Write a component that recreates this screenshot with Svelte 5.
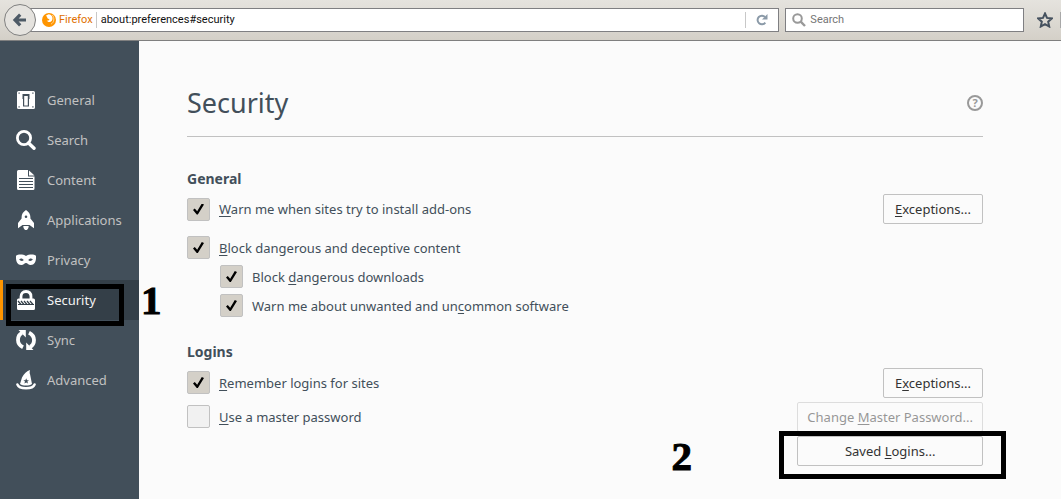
<script lang="ts">
  const nav = ['General', 'Search', 'Content', 'Applications', 'Privacy', 'Security', 'Sync', 'Advanced'];
  let current = $state('Security');
  let warn = $state(true);
  let block = $state(true);
  let downloads = $state(true);
  let unwanted = $state(true);
  let remember = $state(true);
  let master = $state(false);
</script>

{#snippet icon(name: string)}
  <svg class="nav-icon" viewBox="0 0 20 20" aria-hidden="true">
    {#if name === 'General'}
      <path fill-rule="evenodd" d="M2.500 1h15A1.500 1.500 0 0 1 19 2.500v15a1.500 1.500 0 0 1-1.500 1.500h-15A1.500 1.500 0 0 1 1 17.500v-15A1.500 1.500 0 0 1 2.500 1zM6.500 4v5h.5v7.500h6V9h.5V4zM8.200 6h3.600v9.500H8.200zM2.500 2.500v1.200h1.200V2.500zM16.300 2.500v1.200h1.200V2.500zM2.500 16.300v1.200h1.200v-1.200zM16.300 16.300v1.200h1.200v-1.200z" />
    {:else if name === 'Search'}
      <circle cx="8" cy="8" r="6.600" fill="none" stroke="currentColor" stroke-width="2.800" />
      <path d="M12.500 13l5.500 5.300" stroke="currentColor" stroke-width="3.400" stroke-linecap="round" />
    {:else if name === 'Content'}
      <path fill-rule="evenodd" d="M2.500 0H12v6.500h6.500v12a1.500 1.500 0 0 1-1.500 1.500H2.500A1.500 1.500 0 0 1 1 18.500v-17A1.500 1.500 0 0 1 2.500 0zM3 8v1h14V8zM3 11v1h14v-1zM3 14v1h14v-1zM3 17v1h14v-1z" />
      <path d="M13 .400L18.500 5.500H13z" />
    {:else if name === 'Applications'}
      <path fill-rule="evenodd" d="M10 0c2.700 1.800 4.400 4.200 4.400 7v1.600L18 13v5.200L13.500 15H6.500L2 18.200V13l3.600-4.400V7c0-2.800 1.700-5.200 4.400-7zM10 5.500a1.300 1.300 0 1 0 0 2.600 1.300 1.300 0 0 0 0-2.600z" />
      <path d="M7.300 16h5.400c0 2-.8 3.400-2.700 4.500-1.900-1.100-2.700-2.500-2.700-4.500z" />
    {:else if name === 'Privacy'}
      <path fill-rule="evenodd" d="M0 5.700C2 4 7 4 10 5.900c3-1.900 8-1.900 10-.2.300 4.300-.6 9.300-5.200 9.300-2.600 0-3.300-2-4.800-2s-2.200 2-4.800 2C.600 15-.3 10 0 5.700zM3.200 9.300c1 2 3.400 2.100 4.600.8-1.200-1.900-3.300-2-4.600-.8zm13.600 0c-1.300-1.200-3.400-1.100-4.600.8 1.200 1.300 3.600 1.200 4.600-.8z" />
    {:else if name === 'Security'}
      <path fill="none" stroke="currentColor" stroke-width="2.800" d="M5 9.500V6.700c0-3.300 1.800-5.200 5-5.200s5 1.900 5 5.200v2.800" />
      <path d="M2.500 8.500h15A1.500 1.500 0 0 1 19 10v8.500a1.500 1.500 0 0 1-1.500 1.500h-15A1.500 1.500 0 0 1 1 18.500V10a1.500 1.500 0 0 1 1.500-1.500z" />
      <path class="hatch" d="M2 11l3 3.500M5 11l3 3.500M8 11l3 3.500M11 11l3 3.500M14 11l3 3.500M2 14.500h16" />
    {:else if name === 'Sync'}
      <path fill="none" stroke="currentColor" stroke-width="3.800" d="M7 17.300C3.600 15.600 2 13.200 2 10s1.600-5.800 4-6.900M13 2.700C16.400 4.400 18 6.800 18 10s-1.600 5.800-4 6.900" />
      <path d="M2.500 0H9.800v7.500zM17.500 20h-7.300v-7.500z" />
    {:else}
      <path fill-rule="evenodd" d="M14 0c-.6 2-.3 3.500.1 4.600L16 14c-3 2-9 2-12 0L6 7.500C7.700 3.800 11 1 14 0zM10.200 8.300l-.8 1.900-2 .1 1.600 1.300-.6 2 1.800-1.200 1.800 1.200-.6-2 1.600-1.300-2-.1z" />
      <path fill="none" stroke="currentColor" stroke-width="2.400" stroke-linecap="round" d="M1.400 14.500c1.800 5 15.400 5 17.200 0" />
    {/if}
  </svg>
{/snippet}

<div class="window">
  <header class="toolbar">
    <button class="back" aria-label="Back">
      <svg viewBox="0 0 16 16"><path d="M14 8H3.500M8.200 2.600L3 8l5.200 5.400" fill="none" stroke="#4d5a66" stroke-width="3.200" /></svg>
    </button>
    <div class="url">
      <svg class="fox" viewBox="0 0 14 14" aria-hidden="true">
        <circle cx="7" cy="7" r="7" fill="#ff9500" />
        <path d="M6.500 1.300c2 .2 3.300 1.200 3.800 2.700.8 3-1 5-3 5-1.300 0-2-.7-2.500-1.500 1.300.4 2.300 0 2.800-1L5.400 5.300 5 3.800 3.800 2.700z" fill="#fff" />
        <path d="M10.400 2c2.400 3 1.700 7.500-1.200 9" fill="none" stroke="#ffd9a0" />
      </svg>
      <span class="brand">Firefox</span>
      <input class="address" type="text" aria-label="Address" value="about:preferences#security" />
      <button class="reload" aria-label="Reload">
        <svg viewBox="0 0 12 12"><path d="M9.300 8.600A4.300 4.300 0 1 1 9 3" fill="none" stroke="#8b9aa8" stroke-width="2" /><path d="M11.500 0v5.500H6z" fill="#8b9aa8" /></svg>
      </button>
    </div>
    <div class="search">
      <svg viewBox="0 0 14 14" aria-hidden="true"><circle cx="5.500" cy="5.500" r="4.300" fill="none" stroke="#999" stroke-width="2" /><path d="M8.700 8.700l4.300 4.300" stroke="#999" stroke-width="2.400" /></svg>
      <input type="text" aria-label="Search" placeholder="Search" />
    </div>
    <button class="star" aria-label="Bookmark this page">
      <svg viewBox="0 0 16 16"><path d="M8 1.500l2 4.400 4.800.5-3.600 3.300 1 4.800L8 12.100l-4.200 2.400 1-4.800L1.200 6.400 6 5.900z" fill="none" stroke="#46525f" stroke-width="2" /></svg>
    </button>
    <span class="divider"></span>
  </header>

  <div class="body">
    <nav>
      {#each nav as name}
        <a href={'#' + name.toLowerCase()} class:active={current === name} onclick={() => (current = name)}>
          {@render icon(name)}
          <span>{name}</span>
          {#if name === 'Security'}
            <span class="frame frame-nav"></span>
            <span class="numeral numeral-one">1</span>
          {/if}
        </a>
      {/each}
    </nav>

    <main>
      <div class="title">
        <h1>Security</h1>
        <button class="help" aria-label="Help">?</button>
      </div>

      <section>
        <h2>General</h2>
        <div class="row">
          <label><input type="checkbox" bind:checked={warn} /><span><u>W</u>arn me when sites try to install add-ons</span></label>
          <button class="btn short"><u>E</u>xceptions...</button>
        </div>
        <div class="group">
          <label><input type="checkbox" bind:checked={block} /><span><u>B</u>lock dangerous and deceptive content</span></label>
          <label class="sub"><input type="checkbox" bind:checked={downloads} /><span>Block <u>d</u>angerous downloads</span></label>
          <label class="sub"><input type="checkbox" bind:checked={unwanted} /><span>Warn me about unwanted and un<u>c</u>ommon software</span></label>
        </div>
      </section>

      <section>
        <h2>Logins</h2>
        <div class="logins">
          <div class="checks">
            <label><input type="checkbox" bind:checked={remember} /><span><u>R</u>emember logins for sites</span></label>
            <label><input type="checkbox" bind:checked={master} /><span><u>U</u>se a master password</span></label>
          </div>
          <div class="actions">
            <button class="btn short">E<u>x</u>ceptions...</button>
            <button class="btn" disabled={!master}>Change <u>M</u>aster Password...</button>
            <div class="saved">
              <button class="btn">Saved <u>L</u>ogins...</button>
              <span class="frame frame-saved"></span>
              <span class="numeral numeral-two">2</span>
            </div>
          </div>
        </div>
      </section>
    </main>
  </div>
</div>

<style>
  :global(body) { margin: 0; background: #fbfbfb; }
  .window {
    min-height: 100vh;
    display: flex;
    flex-direction: column;
    overflow: hidden;
    font: 13px/20px "Noto Sans", "Open Sans", sans-serif;
    color: #424f5a;
  }
  * { box-sizing: border-box; }
  button, input { font: inherit; color: inherit; margin: 0; padding: 0; }
  button { background: none; border: 0; }
  svg { display: block; flex: none; }
  u { text-underline-offset: 2px; }

  .toolbar {
    display: flex;
    align-items: center;
    height: 41px;
    padding-left: 4px;
    background: linear-gradient(#e5e3de, #d4d0c8);
    border-bottom: 1px solid #7f7f7f;
    font-family: Roboto, "Noto Sans", sans-serif;
    font-size: 11px;
  }
  .back {
    display: grid;
    place-items: center;
    flex: none;
    width: 32px;
    height: 32px;
    border: 1px solid #808080;
    border-radius: 50%;
    background: #e5e3df;
    z-index: 1;
  }
  .back svg { width: 16px; height: 16px; }
  .url, .search {
    display: flex;
    align-items: center;
    height: 24px;
    border: 1px solid #7f7f82;
    background: #fff;
  }
  .url { flex: 763 1 0; margin-left: -16px; padding-left: 21px; }
  .fox { width: 14px; height: 14px; }
  .brand {
    margin: 0 4px 0 3px;
    padding-right: 3px;
    line-height: 16px;
    border-right: 1px solid #c8c8c8;
    color: #e07000;
  }
  .address, .search input { flex: 1; min-width: 0; border: 0; outline: 0; background: none; }
  .address { color: #111; }
  .reload {
    display: grid;
    place-items: center;
    width: 33px;
    height: 16px;
    border-left: 1px solid #c8c8c8;
  }
  .reload svg { width: 12px; height: 12px; }
  .search { flex: 239 1 0; margin-left: 6px; padding-left: 6px; gap: 4px; }
  .search svg { width: 14px; height: 14px; }
  .search input::placeholder { color: #757575; opacity: 1; }
  .star { margin: 0 7px 0 13px; }
  .star svg { width: 16px; height: 16px; }
  .divider { width: 1px; height: 16px; background: #a8a8a8; }

  .body { display: flex; flex: 1; }
  nav { flex: none; width: 139px; padding-top: 39px; background: #424f5a; }
  nav a {
    position: relative;
    display: flex;
    align-items: center;
    gap: 11px;
    height: 40px;
    padding-left: 16px;
    color: #c1c1c1;
    text-decoration: none;
  }
  nav a.active { background: #343f48; color: #f2f2f2; box-shadow: inset 3px 0 #ff9500; }
  .nav-icon { width: 20px; height: 20px; fill: #fff; color: #fff; }
  .hatch { fill: none; stroke: #343f48; stroke-width: 1.2; }

  .frame { position: absolute; border: 5px solid #000; pointer-events: none; }
  .frame-nav { left: 6px; top: 4px; width: 118px; height: 42px; z-index: 1; }
  .frame-saved { inset: -5px -23px -13px -18px; }
  .numeral {
    position: absolute;
    font: bold 41px/40px "Liberation Serif", serif;
    color: #000;
    -webkit-text-stroke: 1px #000;
  }
  .numeral-one { left: 141px; top: 0; }
  .numeral-two { right: 291px; top: 0; }

  main { flex: 1; padding: 41px 78px 0 48px; }
  .title {
    display: flex;
    align-items: center;
    justify-content: space-between;
    height: 55px;
    padding-bottom: 13px;
    border-bottom: 1px solid #c1c1c1;
  }
  h1 { margin: 0; font-size: 27px; line-height: 40px; font-weight: 400; }
  .help {
    width: 16px;
    height: 16px;
    border: 2px solid #999;
    border-radius: 50%;
    color: #999;
    font-size: 11px;
    line-height: 12px;
    font-weight: 700;
  }
  section { padding-top: 32px; }
  section + section { padding-top: 25px; }
  h2 { margin: 0 0 5px; font-size: 14px; line-height: 20px; font-weight: 700; }
  .row { display: flex; align-items: center; justify-content: space-between; }
  label { display: flex; align-items: center; gap: 9px; }
  .group { display: grid; gap: 6px; padding-top: 12px; }
  .sub { padding-left: 33px; }
  input[type='checkbox'] {
    appearance: none;
    flex: none;
    width: 23px;
    height: 23px;
    border: 1px solid #c1c1c1;
    border-radius: 2px;
    background: #f1f1f1;
    display: grid;
    place-items: center;
  }
  input[type='checkbox']:checked { background: #d4d0c8; }
  input[type='checkbox']:checked::before {
    content: '';
    width: 11px;
    height: 11px;
    background: #000;
    clip-path: polygon(0 58%, 16% 46%, 38% 70%, 80% 0, 100% 8%, 44% 100%, 34% 100%);
  }
  .btn {
    height: 30px;
    padding: 0 9px;
    border: 1px solid #c1c1c1;
    border-radius: 2px;
    background: #fbfbfb;
    color: #333;
    white-space: nowrap;
  }
  .btn:disabled { opacity: 0.5; }
  .logins { display: flex; justify-content: space-between; align-items: flex-start; padding-top: 1px; }
  .checks { display: grid; gap: 11px; padding-top: 3px; }
  .actions { display: grid; gap: 4px; }
  .short { min-width: 100px; justify-self: end; }
  .saved { position: relative; display: grid; }
</style>
